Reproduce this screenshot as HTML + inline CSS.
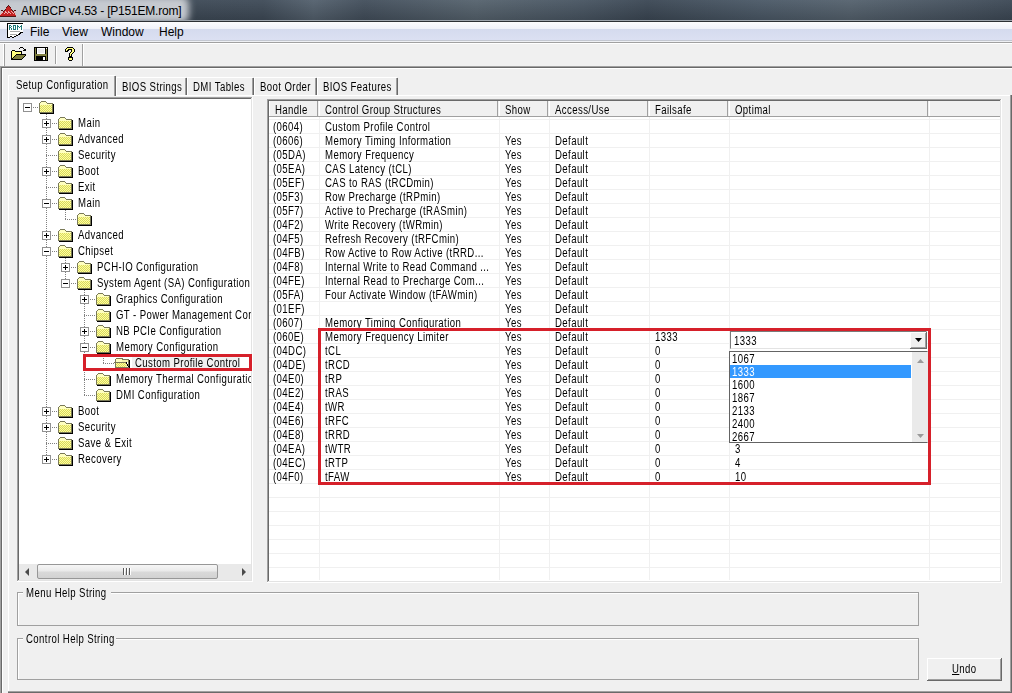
<!DOCTYPE html>
<html><head><meta charset="utf-8"><style>
html,body{margin:0;padding:0;}
body{width:1012px;height:693px;position:relative;overflow:hidden;background:#f0f0f0;font-family:"Liberation Sans",sans-serif;}
.t{position:absolute;white-space:nowrap;font-family:"Liberation Sans",sans-serif;}
.m{position:absolute;white-space:nowrap;font-family:"Liberation Sans",sans-serif;font-size:12px;transform:scaleX(0.8);transform-origin:0 0;letter-spacing:0.5px;}
div{box-sizing:border-box}
</style></head><body>
<div style="position:absolute;left:0px;top:0px;width:1012px;height:20px;background:linear-gradient(90deg,#56616d 0%,#3f4b58 19%,#404c59 26%,#55626f 31%,#44505d 36%,#57646f 47%,#4a5764 57%,#3d4956 64%,#4c5a68 75%,#56636f 84%,#46525f 95%,#3e4a57 100%)"></div>
<div style="position:absolute;left:0px;top:0px;width:1012px;height:20px;background:linear-gradient(180deg,rgba(255,255,255,0.04),rgba(0,0,0,0.16))"></div>
<div style="position:absolute;left:-10px;top:-4px;width:199px;height:27px;background:#c6cad0;filter:blur(3.5px);border-radius:8px"></div>
<div style="position:absolute;left:0px;top:20px;width:1012px;height:1px;background:#9ea5ad"></div>
<div style="position:absolute;left:0px;top:21px;width:1012px;height:1px;background:#2c3035"></div>
<svg style="position:absolute;left:0px;top:2px" width="16" height="15" shape-rendering="crispEdges"><rect x="8" y="3" width="1" height="1" fill="#501818"/><rect x="7" y="4" width="1" height="1" fill="#501818"/><rect x="8" y="4" width="1" height="1" fill="#c42222"/><rect x="9" y="4" width="1" height="1" fill="#501818"/><rect x="6" y="5" width="1" height="1" fill="#501818"/><rect x="7" y="5" width="3" height="1" fill="#c42222"/><rect x="10" y="5" width="1" height="1" fill="#501818"/><rect x="6" y="6" width="5" height="1" fill="#c42222"/><rect x="5" y="7" width="1" height="1" fill="#501818"/><rect x="6" y="7" width="5" height="1" fill="#c42222"/><rect x="11" y="7" width="1" height="1" fill="#501818"/><rect x="1" y="8" width="2" height="1" fill="#501818"/><rect x="4" y="8" width="1" height="1" fill="#501818"/><rect x="5" y="8" width="7" height="1" fill="#c42222"/><rect x="12" y="8" width="1" height="1" fill="#501818"/><rect x="14" y="8" width="2" height="1" fill="#501818"/><rect x="2" y="9" width="1" height="1" fill="#eeb0b0"/><rect x="3" y="9" width="1" height="1" fill="#501818"/><rect x="4" y="9" width="1" height="1" fill="#c42222"/><rect x="5" y="9" width="1" height="1" fill="#eeb0b0"/><rect x="6" y="9" width="2" height="1" fill="#c42222"/><rect x="8" y="9" width="1" height="1" fill="#eeb0b0"/><rect x="9" y="9" width="2" height="1" fill="#c42222"/><rect x="11" y="9" width="1" height="1" fill="#eeb0b0"/><rect x="12" y="9" width="1" height="1" fill="#c42222"/><rect x="13" y="9" width="1" height="1" fill="#501818"/><rect x="14" y="9" width="1" height="1" fill="#eeb0b0"/><rect x="1" y="10" width="1" height="1" fill="#eeb0b0"/><rect x="3" y="10" width="2" height="1" fill="#c42222"/><rect x="5" y="10" width="2" height="1" fill="#eeb0b0"/><rect x="7" y="10" width="1" height="1" fill="#c42222"/><rect x="8" y="10" width="2" height="1" fill="#eeb0b0"/><rect x="10" y="10" width="2" height="1" fill="#c42222"/><rect x="12" y="10" width="1" height="1" fill="#eeb0b0"/><rect x="13" y="10" width="1" height="1" fill="#c42222"/><rect x="15" y="10" width="1" height="1" fill="#eeb0b0"/><rect x="1" y="11" width="1" height="1" fill="#eeb0b0"/><rect x="2" y="11" width="2" height="1" fill="#c42222"/><rect x="4" y="11" width="1" height="1" fill="#eeb0b0"/><rect x="5" y="11" width="2" height="1" fill="#c42222"/><rect x="7" y="11" width="1" height="1" fill="#eeb0b0"/><rect x="8" y="11" width="2" height="1" fill="#c42222"/><rect x="10" y="11" width="1" height="1" fill="#eeb0b0"/><rect x="11" y="11" width="2" height="1" fill="#c42222"/><rect x="13" y="11" width="1" height="1" fill="#eeb0b0"/><rect x="14" y="11" width="1" height="1" fill="#c42222"/><rect x="0" y="12" width="1" height="1" fill="#eeb0b0"/><rect x="1" y="12" width="14" height="1" fill="#c42222"/><rect x="15" y="12" width="1" height="1" fill="#eeb0b0"/><rect x="0" y="13" width="16" height="1" fill="#c42222"/><rect x="0" y="14" width="16" height="1" fill="#501818"/></svg>
<div class="t" style="left:21px;top:3px;line-height:16px;font-size:12px;letter-spacing:-0.2px;color:#000;">AMIBCP v4.53 - [P151EM.rom]</div>
<div style="position:absolute;left:0px;top:22px;width:1012px;height:18px;background:linear-gradient(180deg,#fcfcfe 0%,#f1f3fa 36%,#d5dbee 40%,#dbe0f2 100%)"></div>
<div style="position:absolute;left:0px;top:40px;width:1012px;height:1px;background:#c3c7d0"></div>
<div style="position:absolute;left:0px;top:41px;width:1012px;height:1px;background:#eef0f4"></div>
<svg style="position:absolute;left:4px;top:21px" width="19" height="17" shape-rendering="crispEdges"><rect x="3" y="2" width="16" height="1" fill="#000"/><rect x="3" y="3" width="1" height="1" fill="#000"/><rect x="4" y="3" width="15" height="1" fill="#fff"/><rect x="3" y="4" width="1" height="1" fill="#000"/><rect x="4" y="4" width="1" height="1" fill="#fff"/><rect x="5" y="4" width="2" height="1" fill="#1f7a7a"/><rect x="7" y="4" width="1" height="1" fill="#fff"/><rect x="8" y="4" width="1" height="1" fill="#fff"/><rect x="9" y="4" width="3" height="1" fill="#1f7a7a"/><rect x="12" y="4" width="1" height="1" fill="#fff"/><rect x="13" y="4" width="1" height="1" fill="#1f7a7a"/><rect x="14" y="4" width="3" height="1" fill="#fff"/><rect x="17" y="4" width="1" height="1" fill="#1f7a7a"/><rect x="18" y="4" width="1" height="1" fill="#fff"/><rect x="3" y="5" width="1" height="1" fill="#000"/><rect x="4" y="5" width="1" height="1" fill="#fff"/><rect x="5" y="5" width="1" height="1" fill="#1f7a7a"/><rect x="6" y="5" width="1" height="1" fill="#fff"/><rect x="7" y="5" width="1" height="1" fill="#1f7a7a"/><rect x="8" y="5" width="1" height="1" fill="#fff"/><rect x="9" y="5" width="1" height="1" fill="#1f7a7a"/><rect x="10" y="5" width="1" height="1" fill="#fff"/><rect x="11" y="5" width="1" height="1" fill="#1f7a7a"/><rect x="12" y="5" width="1" height="1" fill="#fff"/><rect x="13" y="5" width="2" height="1" fill="#1f7a7a"/><rect x="15" y="5" width="1" height="1" fill="#fff"/><rect x="16" y="5" width="2" height="1" fill="#1f7a7a"/><rect x="18" y="5" width="1" height="1" fill="#fff"/><rect x="3" y="6" width="1" height="1" fill="#000"/><rect x="4" y="6" width="1" height="1" fill="#fff"/><rect x="5" y="6" width="2" height="1" fill="#1f7a7a"/><rect x="7" y="6" width="1" height="1" fill="#fff"/><rect x="8" y="6" width="1" height="1" fill="#fff"/><rect x="9" y="6" width="1" height="1" fill="#1f7a7a"/><rect x="10" y="6" width="1" height="1" fill="#fff"/><rect x="11" y="6" width="1" height="1" fill="#1f7a7a"/><rect x="12" y="6" width="1" height="1" fill="#fff"/><rect x="13" y="6" width="1" height="1" fill="#1f7a7a"/><rect x="14" y="6" width="1" height="1" fill="#fff"/><rect x="15" y="6" width="1" height="1" fill="#1f7a7a"/><rect x="16" y="6" width="1" height="1" fill="#fff"/><rect x="17" y="6" width="1" height="1" fill="#1f7a7a"/><rect x="18" y="6" width="1" height="1" fill="#fff"/><rect x="3" y="7" width="1" height="1" fill="#000"/><rect x="4" y="7" width="1" height="1" fill="#fff"/><rect x="5" y="7" width="1" height="1" fill="#1f7a7a"/><rect x="6" y="7" width="1" height="1" fill="#fff"/><rect x="7" y="7" width="1" height="1" fill="#1f7a7a"/><rect x="8" y="7" width="1" height="1" fill="#fff"/><rect x="9" y="7" width="1" height="1" fill="#1f7a7a"/><rect x="10" y="7" width="1" height="1" fill="#fff"/><rect x="11" y="7" width="1" height="1" fill="#1f7a7a"/><rect x="12" y="7" width="1" height="1" fill="#fff"/><rect x="13" y="7" width="1" height="1" fill="#1f7a7a"/><rect x="14" y="7" width="3" height="1" fill="#fff"/><rect x="17" y="7" width="1" height="1" fill="#1f7a7a"/><rect x="18" y="7" width="1" height="1" fill="#fff"/><rect x="3" y="8" width="1" height="1" fill="#000"/><rect x="4" y="8" width="1" height="1" fill="#fff"/><rect x="5" y="8" width="1" height="1" fill="#1f7a7a"/><rect x="6" y="8" width="1" height="1" fill="#fff"/><rect x="7" y="8" width="1" height="1" fill="#1f7a7a"/><rect x="8" y="8" width="1" height="1" fill="#fff"/><rect x="9" y="8" width="3" height="1" fill="#1f7a7a"/><rect x="12" y="8" width="1" height="1" fill="#fff"/><rect x="13" y="8" width="1" height="1" fill="#1f7a7a"/><rect x="14" y="8" width="3" height="1" fill="#fff"/><rect x="17" y="8" width="1" height="1" fill="#1f7a7a"/><rect x="18" y="8" width="1" height="1" fill="#fff"/><rect x="3" y="9" width="1" height="1" fill="#000"/><rect x="4" y="9" width="15" height="1" fill="#fff"/><rect x="3" y="10" width="1" height="1" fill="#000"/><rect x="4" y="10" width="2" height="1" fill="#fff"/><rect x="6" y="10" width="10" height="1" fill="#a8a8a8"/><rect x="16" y="10" width="3" height="1" fill="#fff"/><rect x="3" y="11" width="1" height="1" fill="#000"/><rect x="4" y="11" width="12" height="1" fill="#fff"/><rect x="16" y="11" width="3" height="1" fill="#000"/><rect x="3" y="12" width="1" height="1" fill="#000"/><rect x="4" y="12" width="11" height="1" fill="#fff"/><rect x="15" y="12" width="2" height="1" fill="#000"/><rect x="3" y="13" width="1" height="1" fill="#000"/><rect x="4" y="13" width="2" height="1" fill="#fff"/><rect x="6" y="13" width="7" height="1" fill="#a8a8a8"/><rect x="13" y="13" width="1" height="1" fill="#fff"/><rect x="14" y="13" width="2" height="1" fill="#000"/><rect x="3" y="14" width="1" height="1" fill="#000"/><rect x="4" y="14" width="8" height="1" fill="#fff"/><rect x="12" y="14" width="2" height="1" fill="#000"/><rect x="3" y="15" width="1" height="1" fill="#000"/><rect x="4" y="15" width="2" height="1" fill="#fff"/><rect x="6" y="15" width="2" height="1" fill="#000"/><rect x="8" y="15" width="2" height="1" fill="#fff"/><rect x="10" y="15" width="2" height="1" fill="#000"/><rect x="3" y="16" width="3" height="1" fill="#000"/><rect x="8" y="16" width="2" height="1" fill="#000"/></svg>
<div class="t" style="left:30px;top:24px;line-height:16px;font-size:12px;letter-spacing:0px;color:#000;">File</div>
<div class="t" style="left:62px;top:24px;line-height:16px;font-size:12px;letter-spacing:0px;color:#000;">View</div>
<div class="t" style="left:101px;top:24px;line-height:16px;font-size:12px;letter-spacing:0px;color:#000;">Window</div>
<div class="t" style="left:159px;top:24px;line-height:16px;font-size:12px;letter-spacing:0px;color:#000;">Help</div>
<div style="position:absolute;left:0px;top:42px;width:1012px;height:25px;background:#f0f0f0"></div>
<div style="position:absolute;left:0px;top:42px;width:1012px;height:1px;background:#a0a0a0"></div>
<div style="position:absolute;left:0px;top:43px;width:1012px;height:1px;background:#ffffff"></div>
<div style="position:absolute;left:3px;top:44px;width:1px;height:22px;background:#fff"></div>
<div style="position:absolute;left:4px;top:44px;width:1px;height:22px;background:#a0a0a0"></div>
<div style="position:absolute;left:82px;top:44px;width:1px;height:22px;background:#a0a0a0"></div>
<div style="position:absolute;left:83px;top:44px;width:1px;height:22px;background:#fff"></div>
<div style="position:absolute;left:55px;top:46px;width:1px;height:18px;background:#a0a0a0"></div>
<div style="position:absolute;left:56px;top:46px;width:1px;height:18px;background:#fff"></div>
<svg style="position:absolute;left:9px;top:44px" width="19" height="16" shape-rendering="crispEdges"><rect x="11" y="3" width="3" height="1" fill="#000"/><rect x="10" y="4" width="1" height="1" fill="#000"/><rect x="14" y="4" width="1" height="1" fill="#000"/><rect x="15" y="5" width="2" height="1" fill="#000"/><rect x="3" y="6" width="3" height="1" fill="#000"/><rect x="14" y="6" width="3" height="1" fill="#000"/><rect x="2" y="7" width="1" height="1" fill="#000"/><rect x="3" y="7" width="3" height="1" fill="#ffff80"/><rect x="6" y="7" width="7" height="1" fill="#000"/><rect x="2" y="8" width="1" height="1" fill="#000"/><rect x="3" y="8" width="9" height="1" fill="#ffff80"/><rect x="12" y="8" width="1" height="1" fill="#000"/><rect x="2" y="9" width="1" height="1" fill="#000"/><rect x="3" y="9" width="9" height="1" fill="#ffff80"/><rect x="12" y="9" width="1" height="1" fill="#000"/><rect x="2" y="10" width="1" height="1" fill="#000"/><rect x="3" y="10" width="4" height="1" fill="#ffff80"/><rect x="7" y="10" width="10" height="1" fill="#000"/><rect x="2" y="11" width="1" height="1" fill="#000"/><rect x="3" y="11" width="3" height="1" fill="#ffff80"/><rect x="6" y="11" width="1" height="1" fill="#000"/><rect x="7" y="11" width="9" height="1" fill="#808040"/><rect x="16" y="11" width="1" height="1" fill="#000"/><rect x="2" y="12" width="1" height="1" fill="#000"/><rect x="3" y="12" width="2" height="1" fill="#ffff80"/><rect x="5" y="12" width="1" height="1" fill="#000"/><rect x="6" y="12" width="9" height="1" fill="#808040"/><rect x="15" y="12" width="1" height="1" fill="#000"/><rect x="2" y="13" width="1" height="1" fill="#000"/><rect x="3" y="13" width="1" height="1" fill="#ffff80"/><rect x="4" y="13" width="1" height="1" fill="#000"/><rect x="5" y="13" width="9" height="1" fill="#808040"/><rect x="14" y="13" width="1" height="1" fill="#000"/><rect x="2" y="14" width="2" height="1" fill="#000"/><rect x="4" y="14" width="9" height="1" fill="#808040"/><rect x="13" y="14" width="1" height="1" fill="#000"/><rect x="2" y="15" width="11" height="1" fill="#000"/></svg>
<svg style="position:absolute;left:34px;top:47px" width="14" height="14" shape-rendering="crispEdges"><rect x="0" y="0" width="14" height="1" fill="#000"/><rect x="0" y="1" width="1" height="1" fill="#000"/><rect x="1" y="1" width="1" height="1" fill="#808040"/><rect x="2" y="1" width="1" height="1" fill="#000"/><rect x="3" y="1" width="8" height="1" fill="#ffffff"/><rect x="11" y="1" width="1" height="1" fill="#000"/><rect x="12" y="1" width="1" height="1" fill="#ffffff"/><rect x="13" y="1" width="1" height="1" fill="#000"/><rect x="0" y="2" width="1" height="1" fill="#000"/><rect x="1" y="2" width="1" height="1" fill="#808040"/><rect x="2" y="2" width="1" height="1" fill="#000"/><rect x="3" y="2" width="1" height="1" fill="#ffffff"/><rect x="4" y="2" width="6" height="1" fill="#e8e8ec"/><rect x="10" y="2" width="1" height="1" fill="#ffffff"/><rect x="11" y="2" width="1" height="1" fill="#000"/><rect x="12" y="2" width="1" height="1" fill="#808040"/><rect x="13" y="2" width="1" height="1" fill="#000"/><rect x="0" y="3" width="1" height="1" fill="#000"/><rect x="1" y="3" width="1" height="1" fill="#808040"/><rect x="2" y="3" width="1" height="1" fill="#000"/><rect x="3" y="3" width="1" height="1" fill="#ffffff"/><rect x="4" y="3" width="6" height="1" fill="#e8e8ec"/><rect x="10" y="3" width="1" height="1" fill="#ffffff"/><rect x="11" y="3" width="1" height="1" fill="#000"/><rect x="12" y="3" width="1" height="1" fill="#808040"/><rect x="13" y="3" width="1" height="1" fill="#000"/><rect x="0" y="4" width="1" height="1" fill="#000"/><rect x="1" y="4" width="1" height="1" fill="#808040"/><rect x="2" y="4" width="1" height="1" fill="#000"/><rect x="3" y="4" width="1" height="1" fill="#ffffff"/><rect x="4" y="4" width="6" height="1" fill="#e8e8ec"/><rect x="10" y="4" width="1" height="1" fill="#ffffff"/><rect x="11" y="4" width="1" height="1" fill="#000"/><rect x="12" y="4" width="1" height="1" fill="#808040"/><rect x="13" y="4" width="1" height="1" fill="#000"/><rect x="0" y="5" width="1" height="1" fill="#000"/><rect x="1" y="5" width="1" height="1" fill="#808040"/><rect x="2" y="5" width="1" height="1" fill="#000"/><rect x="3" y="5" width="1" height="1" fill="#ffffff"/><rect x="4" y="5" width="6" height="1" fill="#e8e8ec"/><rect x="10" y="5" width="1" height="1" fill="#ffffff"/><rect x="11" y="5" width="1" height="1" fill="#000"/><rect x="12" y="5" width="1" height="1" fill="#808040"/><rect x="13" y="5" width="1" height="1" fill="#000"/><rect x="0" y="6" width="1" height="1" fill="#000"/><rect x="1" y="6" width="1" height="1" fill="#808040"/><rect x="2" y="6" width="1" height="1" fill="#000"/><rect x="3" y="6" width="8" height="1" fill="#ffffff"/><rect x="11" y="6" width="1" height="1" fill="#000"/><rect x="12" y="6" width="1" height="1" fill="#808040"/><rect x="13" y="6" width="1" height="1" fill="#000"/><rect x="0" y="7" width="1" height="1" fill="#000"/><rect x="1" y="7" width="12" height="1" fill="#808040"/><rect x="13" y="7" width="1" height="1" fill="#000"/><rect x="0" y="8" width="1" height="1" fill="#000"/><rect x="1" y="8" width="12" height="1" fill="#808040"/><rect x="13" y="8" width="1" height="1" fill="#000"/><rect x="0" y="9" width="1" height="1" fill="#000"/><rect x="1" y="9" width="1" height="1" fill="#808040"/><rect x="2" y="9" width="10" height="1" fill="#000"/><rect x="12" y="9" width="1" height="1" fill="#808040"/><rect x="13" y="9" width="1" height="1" fill="#000"/><rect x="0" y="10" width="1" height="1" fill="#000"/><rect x="1" y="10" width="1" height="1" fill="#808040"/><rect x="2" y="10" width="7" height="1" fill="#000"/><rect x="9" y="10" width="2" height="1" fill="#ffffff"/><rect x="11" y="10" width="1" height="1" fill="#000"/><rect x="12" y="10" width="1" height="1" fill="#808040"/><rect x="13" y="10" width="1" height="1" fill="#000"/><rect x="0" y="11" width="1" height="1" fill="#000"/><rect x="1" y="11" width="1" height="1" fill="#808040"/><rect x="2" y="11" width="7" height="1" fill="#000"/><rect x="9" y="11" width="2" height="1" fill="#ffffff"/><rect x="11" y="11" width="1" height="1" fill="#000"/><rect x="12" y="11" width="1" height="1" fill="#808040"/><rect x="13" y="11" width="1" height="1" fill="#000"/><rect x="0" y="12" width="1" height="1" fill="#000"/><rect x="1" y="12" width="1" height="1" fill="#808040"/><rect x="2" y="12" width="7" height="1" fill="#000"/><rect x="9" y="12" width="2" height="1" fill="#ffffff"/><rect x="11" y="12" width="1" height="1" fill="#000"/><rect x="12" y="12" width="1" height="1" fill="#808040"/><rect x="13" y="12" width="1" height="1" fill="#000"/><rect x="0" y="13" width="14" height="1" fill="#000"/></svg>
<svg style="position:absolute;left:62px;top:45px" width="14" height="16" shape-rendering="crispEdges"><rect x="5" y="2" width="6" height="1" fill="#000"/><rect x="4" y="3" width="1" height="1" fill="#000"/><rect x="5" y="3" width="6" height="1" fill="#ffff80"/><rect x="11" y="3" width="1" height="1" fill="#000"/><rect x="3" y="4" width="1" height="1" fill="#000"/><rect x="4" y="4" width="2" height="1" fill="#ffff80"/><rect x="6" y="4" width="4" height="1" fill="#000"/><rect x="10" y="4" width="2" height="1" fill="#ffff80"/><rect x="12" y="4" width="1" height="1" fill="#000"/><rect x="3" y="5" width="1" height="1" fill="#000"/><rect x="4" y="5" width="1" height="1" fill="#ffff80"/><rect x="5" y="5" width="2" height="1" fill="#000"/><rect x="9" y="5" width="1" height="1" fill="#000"/><rect x="10" y="5" width="2" height="1" fill="#ffff80"/><rect x="12" y="5" width="1" height="1" fill="#000"/><rect x="3" y="6" width="3" height="1" fill="#000"/><rect x="9" y="6" width="1" height="1" fill="#000"/><rect x="10" y="6" width="2" height="1" fill="#ffff80"/><rect x="12" y="6" width="1" height="1" fill="#000"/><rect x="8" y="7" width="1" height="1" fill="#000"/><rect x="9" y="7" width="2" height="1" fill="#ffff80"/><rect x="11" y="7" width="1" height="1" fill="#000"/><rect x="7" y="8" width="1" height="1" fill="#000"/><rect x="8" y="8" width="2" height="1" fill="#ffff80"/><rect x="10" y="8" width="1" height="1" fill="#000"/><rect x="7" y="9" width="1" height="1" fill="#000"/><rect x="8" y="9" width="1" height="1" fill="#ffff80"/><rect x="9" y="9" width="1" height="1" fill="#000"/><rect x="7" y="10" width="1" height="1" fill="#000"/><rect x="8" y="10" width="1" height="1" fill="#ffff80"/><rect x="9" y="10" width="1" height="1" fill="#000"/><rect x="7" y="11" width="3" height="1" fill="#000"/><rect x="6" y="12" width="5" height="1" fill="#000"/><rect x="6" y="13" width="1" height="1" fill="#000"/><rect x="7" y="13" width="3" height="1" fill="#ffff80"/><rect x="10" y="13" width="1" height="1" fill="#000"/><rect x="6" y="14" width="1" height="1" fill="#000"/><rect x="7" y="14" width="3" height="1" fill="#ffff80"/><rect x="10" y="14" width="1" height="1" fill="#000"/><rect x="7" y="15" width="3" height="1" fill="#000"/></svg>
<div style="position:absolute;left:0px;top:67px;width:1012px;height:626px;background:#f0f0f0"></div>
<div style="position:absolute;left:0px;top:66px;width:1012px;height:1px;background:#a0a0a0"></div>
<div style="position:absolute;left:0px;top:67px;width:1012px;height:1px;background:#696969"></div>
<div style="position:absolute;left:0px;top:67px;width:1px;height:626px;background:#a0a0a0"></div>
<div style="position:absolute;left:1px;top:68px;width:1px;height:625px;background:#696969"></div>
<div style="position:absolute;left:8px;top:95px;width:1003px;height:1px;background:#fff"></div>
<div style="position:absolute;left:8px;top:95px;width:1px;height:596px;background:#fff"></div>
<div style="position:absolute;left:1010px;top:95px;width:1px;height:597px;background:#a0a0a0"></div>
<div style="position:absolute;left:1011px;top:95px;width:1px;height:598px;background:#696969"></div>
<div style="position:absolute;left:8px;top:691px;width:1003px;height:1px;background:#a0a0a0"></div>
<div style="position:absolute;left:8px;top:692px;width:1004px;height:1px;background:#696969"></div>
<div style="position:absolute;left:2px;top:68px;width:1px;height:625px;background:#fff"></div>
<div style="position:absolute;left:2px;top:68px;width:1010px;height:1px;background:#fff"></div>
<div style="position:absolute;left:116px;top:77px;width:1px;height:18px;background:#fff"></div>
<div style="position:absolute;left:116px;top:77px;width:70px;height:1px;background:#fff"></div>
<div style="position:absolute;left:185px;top:78px;width:1px;height:17px;background:#a0a0a0"></div>
<div style="position:absolute;left:186px;top:78px;width:1px;height:17px;background:#696969"></div>
<div class="m" style="left:122px;top:80px;line-height:14px;color:#000;">BIOS Strings</div>
<div style="position:absolute;left:187px;top:77px;width:1px;height:18px;background:#fff"></div>
<div style="position:absolute;left:187px;top:77px;width:66px;height:1px;background:#fff"></div>
<div style="position:absolute;left:252px;top:78px;width:1px;height:17px;background:#a0a0a0"></div>
<div style="position:absolute;left:253px;top:78px;width:1px;height:17px;background:#696969"></div>
<div class="m" style="left:193px;top:80px;line-height:14px;color:#000;">DMI Tables</div>
<div style="position:absolute;left:254px;top:77px;width:1px;height:18px;background:#fff"></div>
<div style="position:absolute;left:254px;top:77px;width:62px;height:1px;background:#fff"></div>
<div style="position:absolute;left:315px;top:78px;width:1px;height:17px;background:#a0a0a0"></div>
<div style="position:absolute;left:316px;top:78px;width:1px;height:17px;background:#696969"></div>
<div class="m" style="left:260px;top:80px;line-height:14px;color:#000;">Boot Order</div>
<div style="position:absolute;left:317px;top:77px;width:1px;height:18px;background:#fff"></div>
<div style="position:absolute;left:317px;top:77px;width:80px;height:1px;background:#fff"></div>
<div style="position:absolute;left:396px;top:78px;width:1px;height:17px;background:#a0a0a0"></div>
<div style="position:absolute;left:397px;top:78px;width:1px;height:17px;background:#696969"></div>
<div class="m" style="left:323px;top:80px;line-height:14px;color:#000;">BIOS Features</div>
<div style="position:absolute;left:8px;top:75px;width:107px;height:21px;background:#f0f0f0"></div>
<div style="position:absolute;left:8px;top:75px;width:107px;height:1px;background:#fff"></div>
<div style="position:absolute;left:8px;top:75px;width:1px;height:21px;background:#fff"></div>
<div style="position:absolute;left:114px;top:76px;width:1px;height:20px;background:#a0a0a0"></div>
<div style="position:absolute;left:115px;top:76px;width:1px;height:20px;background:#696969"></div>
<div class="m" style="left:16px;top:78px;line-height:14px;color:#000;">Setup Configuration</div>
<div style="position:absolute;left:17px;top:97px;width:236px;height:485px;background:#fff"></div>
<div style="position:absolute;left:17px;top:97px;width:236px;height:1px;background:#a0a0a0"></div>
<div style="position:absolute;left:17px;top:97px;width:1px;height:485px;background:#a0a0a0"></div>
<div style="position:absolute;left:18px;top:98px;width:234px;height:1px;background:#696969"></div>
<div style="position:absolute;left:18px;top:98px;width:1px;height:483px;background:#696969"></div>
<div style="position:absolute;left:17px;top:581px;width:236px;height:1px;background:#fff"></div>
<div style="position:absolute;left:252px;top:97px;width:1px;height:485px;background:#fff"></div>
<div style="position:absolute;left:18px;top:580px;width:234px;height:1px;background:#e3e3e3"></div>
<div style="position:absolute;left:251px;top:98px;width:1px;height:483px;background:#e3e3e3"></div>
<div style="position:absolute;left:19px;top:99px;width:232px;height:465px;overflow:hidden">
<svg style="position:absolute;left:0;top:0" width="232" height="465" shape-rendering="crispEdges"><g fill="#808080"><defs><pattern id="dith" width="2" height="2" patternUnits="userSpaceOnUse"><rect width="2" height="2" fill="#ffff9c"/><rect width="1" height="1" fill="#d8d860"/><rect x="1" y="1" width="1" height="1" fill="#d8d860"/></pattern><g id="fold"><rect x="2" y="0" width="5" height="1" fill="#7a7a58"/><rect x="1" y="1" width="1" height="1" fill="#7a7a58"/><rect x="7" y="1" width="1" height="1" fill="#7a7a58"/><rect x="2" y="1" width="5" height="1" fill="#ffffc0"/><rect x="0" y="2" width="1" height="10" fill="#7a7a58"/><rect x="8" y="2" width="6" height="1" fill="#7a7a58"/><rect x="1" y="2" width="7" height="1" fill="#ffffc0"/><rect x="1" y="3" width="12" height="8" fill="url(#dith)"/><rect x="1" y="3" width="12" height="1" fill="#ffffc0"/><rect x="13" y="3" width="1" height="9" fill="#7a7a58"/><rect x="0" y="11" width="14" height="1" fill="#7a7a58"/><rect x="14" y="3" width="1" height="10" fill="#000"/><rect x="1" y="12" width="14" height="1" fill="#000"/></g><g id="ofold"><rect x="1" y="1" width="7" height="1" fill="#7a7a58"/><rect x="0" y="2" width="1" height="9" fill="#7a7a58"/><rect x="1" y="2" width="6" height="3" fill="#ffffc0"/><rect x="7" y="2" width="6" height="1" fill="#7a7a58"/><rect x="7" y="3" width="6" height="2" fill="#f4f4b0"/><rect x="13" y="2" width="1" height="9" fill="#7a7a58"/><rect x="14" y="3" width="1" height="8" fill="#000"/><rect x="-1" y="5" width="13" height="1" fill="#7a7a58"/><rect x="1" y="6" width="10" height="4" fill="url(#dith)"/><rect x="11" y="5" width="1" height="2" fill="#000"/><rect x="12" y="7" width="1" height="2" fill="#000"/><rect x="13" y="9" width="1" height="1" fill="#000"/><rect x="11" y="7" width="1" height="3" fill="#eeee99"/><rect x="1" y="10" width="13" height="1" fill="#7a7a58"/></g></defs><rect x="27" y="15" width="1" height="1"/><rect x="27" y="17" width="1" height="1"/><rect x="27" y="19" width="1" height="1"/><rect x="27" y="21" width="1" height="1"/><rect x="27" y="23" width="1" height="1"/><rect x="27" y="25" width="1" height="1"/><rect x="27" y="27" width="1" height="1"/><rect x="27" y="29" width="1" height="1"/><rect x="27" y="31" width="1" height="1"/><rect x="27" y="33" width="1" height="1"/><rect x="27" y="35" width="1" height="1"/><rect x="27" y="37" width="1" height="1"/><rect x="27" y="39" width="1" height="1"/><rect x="27" y="41" width="1" height="1"/><rect x="27" y="43" width="1" height="1"/><rect x="27" y="45" width="1" height="1"/><rect x="27" y="47" width="1" height="1"/><rect x="27" y="49" width="1" height="1"/><rect x="27" y="51" width="1" height="1"/><rect x="27" y="53" width="1" height="1"/><rect x="27" y="55" width="1" height="1"/><rect x="27" y="57" width="1" height="1"/><rect x="27" y="59" width="1" height="1"/><rect x="27" y="61" width="1" height="1"/><rect x="27" y="63" width="1" height="1"/><rect x="27" y="65" width="1" height="1"/><rect x="27" y="67" width="1" height="1"/><rect x="27" y="69" width="1" height="1"/><rect x="27" y="71" width="1" height="1"/><rect x="27" y="73" width="1" height="1"/><rect x="27" y="75" width="1" height="1"/><rect x="27" y="77" width="1" height="1"/><rect x="27" y="79" width="1" height="1"/><rect x="27" y="81" width="1" height="1"/><rect x="27" y="83" width="1" height="1"/><rect x="27" y="85" width="1" height="1"/><rect x="27" y="87" width="1" height="1"/><rect x="27" y="89" width="1" height="1"/><rect x="27" y="91" width="1" height="1"/><rect x="27" y="93" width="1" height="1"/><rect x="27" y="95" width="1" height="1"/><rect x="27" y="97" width="1" height="1"/><rect x="27" y="99" width="1" height="1"/><rect x="27" y="101" width="1" height="1"/><rect x="27" y="103" width="1" height="1"/><rect x="27" y="105" width="1" height="1"/><rect x="27" y="107" width="1" height="1"/><rect x="27" y="109" width="1" height="1"/><rect x="27" y="111" width="1" height="1"/><rect x="27" y="113" width="1" height="1"/><rect x="27" y="115" width="1" height="1"/><rect x="27" y="117" width="1" height="1"/><rect x="27" y="119" width="1" height="1"/><rect x="27" y="121" width="1" height="1"/><rect x="27" y="123" width="1" height="1"/><rect x="27" y="125" width="1" height="1"/><rect x="27" y="127" width="1" height="1"/><rect x="27" y="129" width="1" height="1"/><rect x="27" y="131" width="1" height="1"/><rect x="27" y="133" width="1" height="1"/><rect x="27" y="135" width="1" height="1"/><rect x="27" y="137" width="1" height="1"/><rect x="27" y="139" width="1" height="1"/><rect x="27" y="141" width="1" height="1"/><rect x="27" y="143" width="1" height="1"/><rect x="27" y="145" width="1" height="1"/><rect x="27" y="147" width="1" height="1"/><rect x="27" y="149" width="1" height="1"/><rect x="27" y="151" width="1" height="1"/><rect x="27" y="153" width="1" height="1"/><rect x="27" y="155" width="1" height="1"/><rect x="27" y="157" width="1" height="1"/><rect x="27" y="159" width="1" height="1"/><rect x="27" y="161" width="1" height="1"/><rect x="27" y="163" width="1" height="1"/><rect x="27" y="165" width="1" height="1"/><rect x="27" y="167" width="1" height="1"/><rect x="27" y="169" width="1" height="1"/><rect x="27" y="171" width="1" height="1"/><rect x="27" y="173" width="1" height="1"/><rect x="27" y="175" width="1" height="1"/><rect x="27" y="177" width="1" height="1"/><rect x="27" y="179" width="1" height="1"/><rect x="27" y="181" width="1" height="1"/><rect x="27" y="183" width="1" height="1"/><rect x="27" y="185" width="1" height="1"/><rect x="27" y="187" width="1" height="1"/><rect x="27" y="189" width="1" height="1"/><rect x="27" y="191" width="1" height="1"/><rect x="27" y="193" width="1" height="1"/><rect x="27" y="195" width="1" height="1"/><rect x="27" y="197" width="1" height="1"/><rect x="27" y="199" width="1" height="1"/><rect x="27" y="201" width="1" height="1"/><rect x="27" y="203" width="1" height="1"/><rect x="27" y="205" width="1" height="1"/><rect x="27" y="207" width="1" height="1"/><rect x="27" y="209" width="1" height="1"/><rect x="27" y="211" width="1" height="1"/><rect x="27" y="213" width="1" height="1"/><rect x="27" y="215" width="1" height="1"/><rect x="27" y="217" width="1" height="1"/><rect x="27" y="219" width="1" height="1"/><rect x="27" y="221" width="1" height="1"/><rect x="27" y="223" width="1" height="1"/><rect x="27" y="225" width="1" height="1"/><rect x="27" y="227" width="1" height="1"/><rect x="27" y="229" width="1" height="1"/><rect x="27" y="231" width="1" height="1"/><rect x="27" y="233" width="1" height="1"/><rect x="27" y="235" width="1" height="1"/><rect x="27" y="237" width="1" height="1"/><rect x="27" y="239" width="1" height="1"/><rect x="27" y="241" width="1" height="1"/><rect x="27" y="243" width="1" height="1"/><rect x="27" y="245" width="1" height="1"/><rect x="27" y="247" width="1" height="1"/><rect x="27" y="249" width="1" height="1"/><rect x="27" y="251" width="1" height="1"/><rect x="27" y="253" width="1" height="1"/><rect x="27" y="255" width="1" height="1"/><rect x="27" y="257" width="1" height="1"/><rect x="27" y="259" width="1" height="1"/><rect x="27" y="261" width="1" height="1"/><rect x="27" y="263" width="1" height="1"/><rect x="27" y="265" width="1" height="1"/><rect x="27" y="267" width="1" height="1"/><rect x="27" y="269" width="1" height="1"/><rect x="27" y="271" width="1" height="1"/><rect x="27" y="273" width="1" height="1"/><rect x="27" y="275" width="1" height="1"/><rect x="27" y="277" width="1" height="1"/><rect x="27" y="279" width="1" height="1"/><rect x="27" y="281" width="1" height="1"/><rect x="27" y="283" width="1" height="1"/><rect x="27" y="285" width="1" height="1"/><rect x="27" y="287" width="1" height="1"/><rect x="27" y="289" width="1" height="1"/><rect x="27" y="291" width="1" height="1"/><rect x="27" y="293" width="1" height="1"/><rect x="27" y="295" width="1" height="1"/><rect x="27" y="297" width="1" height="1"/><rect x="27" y="299" width="1" height="1"/><rect x="27" y="301" width="1" height="1"/><rect x="27" y="303" width="1" height="1"/><rect x="27" y="305" width="1" height="1"/><rect x="27" y="307" width="1" height="1"/><rect x="27" y="309" width="1" height="1"/><rect x="27" y="311" width="1" height="1"/><rect x="27" y="313" width="1" height="1"/><rect x="27" y="315" width="1" height="1"/><rect x="27" y="317" width="1" height="1"/><rect x="27" y="319" width="1" height="1"/><rect x="27" y="321" width="1" height="1"/><rect x="27" y="323" width="1" height="1"/><rect x="27" y="325" width="1" height="1"/><rect x="27" y="327" width="1" height="1"/><rect x="27" y="329" width="1" height="1"/><rect x="27" y="331" width="1" height="1"/><rect x="27" y="333" width="1" height="1"/><rect x="27" y="335" width="1" height="1"/><rect x="27" y="337" width="1" height="1"/><rect x="27" y="339" width="1" height="1"/><rect x="27" y="341" width="1" height="1"/><rect x="27" y="343" width="1" height="1"/><rect x="27" y="345" width="1" height="1"/><rect x="27" y="347" width="1" height="1"/><rect x="27" y="349" width="1" height="1"/><rect x="27" y="351" width="1" height="1"/><rect x="27" y="353" width="1" height="1"/><rect x="27" y="355" width="1" height="1"/><rect x="27" y="357" width="1" height="1"/><rect x="27" y="359" width="1" height="1"/><rect x="14" y="8" width="1" height="1"/><rect x="16" y="8" width="1" height="1"/><rect x="18" y="8" width="1" height="1"/><rect x="33" y="24" width="1" height="1"/><rect x="35" y="24" width="1" height="1"/><rect x="37" y="24" width="1" height="1"/><rect x="33" y="40" width="1" height="1"/><rect x="35" y="40" width="1" height="1"/><rect x="37" y="40" width="1" height="1"/><rect x="27" y="56" width="1" height="1"/><rect x="29" y="56" width="1" height="1"/><rect x="31" y="56" width="1" height="1"/><rect x="33" y="56" width="1" height="1"/><rect x="35" y="56" width="1" height="1"/><rect x="37" y="56" width="1" height="1"/><rect x="33" y="72" width="1" height="1"/><rect x="35" y="72" width="1" height="1"/><rect x="37" y="72" width="1" height="1"/><rect x="27" y="88" width="1" height="1"/><rect x="29" y="88" width="1" height="1"/><rect x="31" y="88" width="1" height="1"/><rect x="33" y="88" width="1" height="1"/><rect x="35" y="88" width="1" height="1"/><rect x="37" y="88" width="1" height="1"/><rect x="46" y="111" width="1" height="1"/><rect x="46" y="113" width="1" height="1"/><rect x="46" y="115" width="1" height="1"/><rect x="46" y="117" width="1" height="1"/><rect x="46" y="119" width="1" height="1"/><rect x="33" y="104" width="1" height="1"/><rect x="35" y="104" width="1" height="1"/><rect x="37" y="104" width="1" height="1"/><rect x="46" y="120" width="1" height="1"/><rect x="48" y="120" width="1" height="1"/><rect x="50" y="120" width="1" height="1"/><rect x="52" y="120" width="1" height="1"/><rect x="54" y="120" width="1" height="1"/><rect x="56" y="120" width="1" height="1"/><rect x="33" y="136" width="1" height="1"/><rect x="35" y="136" width="1" height="1"/><rect x="37" y="136" width="1" height="1"/><rect x="46" y="159" width="1" height="1"/><rect x="46" y="161" width="1" height="1"/><rect x="46" y="163" width="1" height="1"/><rect x="46" y="165" width="1" height="1"/><rect x="46" y="167" width="1" height="1"/><rect x="46" y="169" width="1" height="1"/><rect x="46" y="171" width="1" height="1"/><rect x="46" y="173" width="1" height="1"/><rect x="46" y="175" width="1" height="1"/><rect x="46" y="177" width="1" height="1"/><rect x="46" y="179" width="1" height="1"/><rect x="46" y="181" width="1" height="1"/><rect x="46" y="183" width="1" height="1"/><rect x="33" y="152" width="1" height="1"/><rect x="35" y="152" width="1" height="1"/><rect x="37" y="152" width="1" height="1"/><rect x="52" y="168" width="1" height="1"/><rect x="54" y="168" width="1" height="1"/><rect x="56" y="168" width="1" height="1"/><rect x="65" y="191" width="1" height="1"/><rect x="65" y="193" width="1" height="1"/><rect x="65" y="195" width="1" height="1"/><rect x="65" y="197" width="1" height="1"/><rect x="65" y="199" width="1" height="1"/><rect x="65" y="201" width="1" height="1"/><rect x="65" y="203" width="1" height="1"/><rect x="65" y="205" width="1" height="1"/><rect x="65" y="207" width="1" height="1"/><rect x="65" y="209" width="1" height="1"/><rect x="65" y="211" width="1" height="1"/><rect x="65" y="213" width="1" height="1"/><rect x="65" y="215" width="1" height="1"/><rect x="65" y="217" width="1" height="1"/><rect x="65" y="219" width="1" height="1"/><rect x="65" y="221" width="1" height="1"/><rect x="65" y="223" width="1" height="1"/><rect x="65" y="225" width="1" height="1"/><rect x="65" y="227" width="1" height="1"/><rect x="65" y="229" width="1" height="1"/><rect x="65" y="231" width="1" height="1"/><rect x="65" y="233" width="1" height="1"/><rect x="65" y="235" width="1" height="1"/><rect x="65" y="237" width="1" height="1"/><rect x="65" y="239" width="1" height="1"/><rect x="65" y="241" width="1" height="1"/><rect x="65" y="243" width="1" height="1"/><rect x="65" y="245" width="1" height="1"/><rect x="65" y="247" width="1" height="1"/><rect x="65" y="249" width="1" height="1"/><rect x="65" y="251" width="1" height="1"/><rect x="65" y="253" width="1" height="1"/><rect x="65" y="255" width="1" height="1"/><rect x="65" y="257" width="1" height="1"/><rect x="65" y="259" width="1" height="1"/><rect x="65" y="261" width="1" height="1"/><rect x="65" y="263" width="1" height="1"/><rect x="65" y="265" width="1" height="1"/><rect x="65" y="267" width="1" height="1"/><rect x="65" y="269" width="1" height="1"/><rect x="65" y="271" width="1" height="1"/><rect x="65" y="273" width="1" height="1"/><rect x="65" y="275" width="1" height="1"/><rect x="65" y="277" width="1" height="1"/><rect x="65" y="279" width="1" height="1"/><rect x="65" y="281" width="1" height="1"/><rect x="65" y="283" width="1" height="1"/><rect x="65" y="285" width="1" height="1"/><rect x="65" y="287" width="1" height="1"/><rect x="65" y="289" width="1" height="1"/><rect x="65" y="291" width="1" height="1"/><rect x="65" y="293" width="1" height="1"/><rect x="65" y="295" width="1" height="1"/><rect x="52" y="184" width="1" height="1"/><rect x="54" y="184" width="1" height="1"/><rect x="56" y="184" width="1" height="1"/><rect x="71" y="200" width="1" height="1"/><rect x="73" y="200" width="1" height="1"/><rect x="75" y="200" width="1" height="1"/><rect x="65" y="216" width="1" height="1"/><rect x="67" y="216" width="1" height="1"/><rect x="69" y="216" width="1" height="1"/><rect x="71" y="216" width="1" height="1"/><rect x="73" y="216" width="1" height="1"/><rect x="75" y="216" width="1" height="1"/><rect x="71" y="232" width="1" height="1"/><rect x="73" y="232" width="1" height="1"/><rect x="75" y="232" width="1" height="1"/><rect x="84" y="255" width="1" height="1"/><rect x="84" y="257" width="1" height="1"/><rect x="84" y="259" width="1" height="1"/><rect x="84" y="261" width="1" height="1"/><rect x="84" y="263" width="1" height="1"/><rect x="71" y="248" width="1" height="1"/><rect x="73" y="248" width="1" height="1"/><rect x="75" y="248" width="1" height="1"/><rect x="84" y="264" width="1" height="1"/><rect x="86" y="264" width="1" height="1"/><rect x="88" y="264" width="1" height="1"/><rect x="90" y="264" width="1" height="1"/><rect x="92" y="264" width="1" height="1"/><rect x="94" y="264" width="1" height="1"/><rect x="65" y="280" width="1" height="1"/><rect x="67" y="280" width="1" height="1"/><rect x="69" y="280" width="1" height="1"/><rect x="71" y="280" width="1" height="1"/><rect x="73" y="280" width="1" height="1"/><rect x="75" y="280" width="1" height="1"/><rect x="65" y="296" width="1" height="1"/><rect x="67" y="296" width="1" height="1"/><rect x="69" y="296" width="1" height="1"/><rect x="71" y="296" width="1" height="1"/><rect x="73" y="296" width="1" height="1"/><rect x="75" y="296" width="1" height="1"/><rect x="33" y="312" width="1" height="1"/><rect x="35" y="312" width="1" height="1"/><rect x="37" y="312" width="1" height="1"/><rect x="33" y="328" width="1" height="1"/><rect x="35" y="328" width="1" height="1"/><rect x="37" y="328" width="1" height="1"/><rect x="27" y="344" width="1" height="1"/><rect x="29" y="344" width="1" height="1"/><rect x="31" y="344" width="1" height="1"/><rect x="33" y="344" width="1" height="1"/><rect x="35" y="344" width="1" height="1"/><rect x="37" y="344" width="1" height="1"/><rect x="33" y="360" width="1" height="1"/><rect x="35" y="360" width="1" height="1"/><rect x="37" y="360" width="1" height="1"/><rect x="4.5" y="4.5" width="8" height="8" fill="#fff" stroke="#919191"/><rect x="6" y="8" width="5" height="1" fill="#000"/><use href="#fold" x="20" y="2"/><rect x="23.5" y="20.5" width="8" height="8" fill="#fff" stroke="#919191"/><rect x="25" y="24" width="5" height="1" fill="#000"/><rect x="27" y="22" width="1" height="5" fill="#000"/><use href="#fold" x="39" y="18"/><rect x="23.5" y="36.5" width="8" height="8" fill="#fff" stroke="#919191"/><rect x="25" y="40" width="5" height="1" fill="#000"/><rect x="27" y="38" width="1" height="5" fill="#000"/><use href="#fold" x="39" y="34"/><use href="#fold" x="39" y="50"/><rect x="23.5" y="68.5" width="8" height="8" fill="#fff" stroke="#919191"/><rect x="25" y="72" width="5" height="1" fill="#000"/><rect x="27" y="70" width="1" height="5" fill="#000"/><use href="#fold" x="39" y="66"/><use href="#fold" x="39" y="82"/><rect x="23.5" y="100.5" width="8" height="8" fill="#fff" stroke="#919191"/><rect x="25" y="104" width="5" height="1" fill="#000"/><use href="#fold" x="39" y="98"/><use href="#fold" x="58" y="114"/><rect x="23.5" y="132.5" width="8" height="8" fill="#fff" stroke="#919191"/><rect x="25" y="136" width="5" height="1" fill="#000"/><rect x="27" y="134" width="1" height="5" fill="#000"/><use href="#fold" x="39" y="130"/><rect x="23.5" y="148.5" width="8" height="8" fill="#fff" stroke="#919191"/><rect x="25" y="152" width="5" height="1" fill="#000"/><use href="#fold" x="39" y="146"/><rect x="42.5" y="164.5" width="8" height="8" fill="#fff" stroke="#919191"/><rect x="44" y="168" width="5" height="1" fill="#000"/><rect x="46" y="166" width="1" height="5" fill="#000"/><use href="#fold" x="58" y="162"/><rect x="42.5" y="180.5" width="8" height="8" fill="#fff" stroke="#919191"/><rect x="44" y="184" width="5" height="1" fill="#000"/><use href="#fold" x="58" y="178"/><rect x="61.5" y="196.5" width="8" height="8" fill="#fff" stroke="#919191"/><rect x="63" y="200" width="5" height="1" fill="#000"/><rect x="65" y="198" width="1" height="5" fill="#000"/><use href="#fold" x="77" y="194"/><use href="#fold" x="77" y="210"/><rect x="61.5" y="228.5" width="8" height="8" fill="#fff" stroke="#919191"/><rect x="63" y="232" width="5" height="1" fill="#000"/><rect x="65" y="230" width="1" height="5" fill="#000"/><use href="#fold" x="77" y="226"/><rect x="61.5" y="244.5" width="8" height="8" fill="#fff" stroke="#919191"/><rect x="63" y="248" width="5" height="1" fill="#000"/><use href="#fold" x="77" y="242"/><use href="#ofold" x="96" y="258"/><use href="#fold" x="77" y="274"/><use href="#fold" x="77" y="290"/><rect x="23.5" y="308.5" width="8" height="8" fill="#fff" stroke="#919191"/><rect x="25" y="312" width="5" height="1" fill="#000"/><rect x="27" y="310" width="1" height="5" fill="#000"/><use href="#fold" x="39" y="306"/><rect x="23.5" y="324.5" width="8" height="8" fill="#fff" stroke="#919191"/><rect x="25" y="328" width="5" height="1" fill="#000"/><rect x="27" y="326" width="1" height="5" fill="#000"/><use href="#fold" x="39" y="322"/><use href="#fold" x="39" y="338"/><rect x="23.5" y="356.5" width="8" height="8" fill="#fff" stroke="#919191"/><rect x="25" y="360" width="5" height="1" fill="#000"/><rect x="27" y="358" width="1" height="5" fill="#000"/><use href="#fold" x="39" y="354"/></g></svg>
<div style="position:absolute;left:113px;top:257px;width:108px;height:14px;background:#f0f0f0"></div>
<div class="m" style="left:59px;top:17px;line-height:14px;color:#000;white-space:nowrap">Main</div>
<div class="m" style="left:59px;top:33px;line-height:14px;color:#000;white-space:nowrap">Advanced</div>
<div class="m" style="left:59px;top:49px;line-height:14px;color:#000;white-space:nowrap">Security</div>
<div class="m" style="left:59px;top:65px;line-height:14px;color:#000;white-space:nowrap">Boot</div>
<div class="m" style="left:59px;top:81px;line-height:14px;color:#000;white-space:nowrap">Exit</div>
<div class="m" style="left:59px;top:97px;line-height:14px;color:#000;white-space:nowrap">Main</div>
<div class="m" style="left:59px;top:129px;line-height:14px;color:#000;white-space:nowrap">Advanced</div>
<div class="m" style="left:59px;top:145px;line-height:14px;color:#000;white-space:nowrap">Chipset</div>
<div class="m" style="left:78px;top:161px;line-height:14px;color:#000;white-space:nowrap">PCH-IO Configuration</div>
<div class="m" style="left:78px;top:177px;line-height:14px;color:#000;white-space:nowrap">System Agent (SA) Configuration</div>
<div class="m" style="left:97px;top:193px;line-height:14px;color:#000;white-space:nowrap">Graphics Configuration</div>
<div class="m" style="left:97px;top:209px;line-height:14px;color:#000;white-space:nowrap">GT - Power Management Configuration</div>
<div class="m" style="left:97px;top:225px;line-height:14px;color:#000;white-space:nowrap">NB PCIe Configuration</div>
<div class="m" style="left:97px;top:241px;line-height:14px;color:#000;white-space:nowrap">Memory Configuration</div>
<div class="m" style="left:116px;top:257px;line-height:14px;color:#000;white-space:nowrap">Custom Profile Control</div>
<div class="m" style="left:97px;top:273px;line-height:14px;color:#000;white-space:nowrap">Memory Thermal Configuration</div>
<div class="m" style="left:97px;top:289px;line-height:14px;color:#000;white-space:nowrap">DMI Configuration</div>
<div class="m" style="left:59px;top:305px;line-height:14px;color:#000;white-space:nowrap">Boot</div>
<div class="m" style="left:59px;top:321px;line-height:14px;color:#000;white-space:nowrap">Security</div>
<div class="m" style="left:59px;top:337px;line-height:14px;color:#000;white-space:nowrap">Save &amp; Exit</div>
<div class="m" style="left:59px;top:353px;line-height:14px;color:#000;white-space:nowrap">Recovery</div>
</div>
<div style="position:absolute;left:83px;top:354px;width:169px;height:17px;border:3px solid #d6202a;box-sizing:border-box"></div>
<div style="position:absolute;left:19px;top:564px;width:232px;height:16px;background:#e9e9e9"></div>
<div style="position:absolute;left:37px;top:564px;width:181px;height:15px;background:linear-gradient(180deg,#f6f6f6 0%,#eaeaea 45%,#d9d9d9 55%,#d2d2d2 100%);border:1px solid #979797;border-radius:2px;box-sizing:border-box"></div>
<svg style="position:absolute;left:25px;top:568px" width="5" height="8"><path d="M4 0 V8 L0 4 Z" fill="#4a4a4a"/></svg>
<svg style="position:absolute;left:242px;top:568px" width="5" height="8"><path d="M0 0 V8 L4 4 Z" fill="#4a4a4a"/></svg>
<div style="position:absolute;left:123px;top:568px;width:1px;height:7px;background:#5a5a5a"></div>
<div style="position:absolute;left:124px;top:568px;width:1px;height:7px;background:#fff"></div>
<div style="position:absolute;left:126px;top:568px;width:1px;height:7px;background:#5a5a5a"></div>
<div style="position:absolute;left:127px;top:568px;width:1px;height:7px;background:#fff"></div>
<div style="position:absolute;left:129px;top:568px;width:1px;height:7px;background:#5a5a5a"></div>
<div style="position:absolute;left:130px;top:568px;width:1px;height:7px;background:#fff"></div>
<div style="position:absolute;left:267px;top:99px;width:735px;height:484px;background:#fff"></div>
<div style="position:absolute;left:267px;top:99px;width:735px;height:1px;background:#a0a0a0"></div>
<div style="position:absolute;left:267px;top:99px;width:1px;height:484px;background:#a0a0a0"></div>
<div style="position:absolute;left:268px;top:100px;width:733px;height:1px;background:#696969"></div>
<div style="position:absolute;left:268px;top:100px;width:1px;height:482px;background:#696969"></div>
<div style="position:absolute;left:267px;top:582px;width:735px;height:1px;background:#fff"></div>
<div style="position:absolute;left:1001px;top:99px;width:1px;height:484px;background:#fff"></div>
<div style="position:absolute;left:268px;top:581px;width:733px;height:1px;background:#e3e3e3"></div>
<div style="position:absolute;left:1000px;top:100px;width:1px;height:482px;background:#e3e3e3"></div>
<div style="position:absolute;left:269px;top:101px;width:731px;height:16px;background:#f0f0f0"></div>
<div style="position:absolute;left:269px;top:116px;width:731px;height:1px;background:#a0a0a0"></div>
<div style="position:absolute;left:269px;top:101px;width:1px;height:15px;background:#fff"></div>
<div style="position:absolute;left:319px;top:101px;width:1px;height:15px;background:#fff"></div>
<div style="position:absolute;left:317px;top:101px;width:1px;height:16px;background:#a0a0a0"></div>
<div style="position:absolute;left:499px;top:101px;width:1px;height:15px;background:#fff"></div>
<div style="position:absolute;left:497px;top:101px;width:1px;height:16px;background:#a0a0a0"></div>
<div style="position:absolute;left:549px;top:101px;width:1px;height:15px;background:#fff"></div>
<div style="position:absolute;left:547px;top:101px;width:1px;height:16px;background:#a0a0a0"></div>
<div style="position:absolute;left:649px;top:101px;width:1px;height:15px;background:#fff"></div>
<div style="position:absolute;left:647px;top:101px;width:1px;height:16px;background:#a0a0a0"></div>
<div style="position:absolute;left:729px;top:101px;width:1px;height:15px;background:#fff"></div>
<div style="position:absolute;left:727px;top:101px;width:1px;height:16px;background:#a0a0a0"></div>
<div style="position:absolute;left:929px;top:101px;width:1px;height:15px;background:#fff"></div>
<div style="position:absolute;left:927px;top:101px;width:1px;height:16px;background:#a0a0a0"></div>
<div class="m" style="left:275px;top:103px;line-height:14px;color:#000;">Handle</div>
<div class="m" style="left:325px;top:103px;line-height:14px;color:#000;">Control Group Structures</div>
<div class="m" style="left:505px;top:103px;line-height:14px;color:#000;">Show</div>
<div class="m" style="left:555px;top:103px;line-height:14px;color:#000;">Access/Use</div>
<div class="m" style="left:655px;top:103px;line-height:14px;color:#000;">Failsafe</div>
<div class="m" style="left:735px;top:103px;line-height:14px;color:#000;">Optimal</div>
<div style="position:absolute;left:269px;top:119px;width:731px;height:1px;background:#f0f0f0"></div>
<div style="position:absolute;left:269px;top:133px;width:731px;height:1px;background:#f0f0f0"></div>
<div style="position:absolute;left:269px;top:147px;width:731px;height:1px;background:#f0f0f0"></div>
<div style="position:absolute;left:269px;top:161px;width:731px;height:1px;background:#f0f0f0"></div>
<div style="position:absolute;left:269px;top:175px;width:731px;height:1px;background:#f0f0f0"></div>
<div style="position:absolute;left:269px;top:189px;width:731px;height:1px;background:#f0f0f0"></div>
<div style="position:absolute;left:269px;top:203px;width:731px;height:1px;background:#f0f0f0"></div>
<div style="position:absolute;left:269px;top:217px;width:731px;height:1px;background:#f0f0f0"></div>
<div style="position:absolute;left:269px;top:231px;width:731px;height:1px;background:#f0f0f0"></div>
<div style="position:absolute;left:269px;top:245px;width:731px;height:1px;background:#f0f0f0"></div>
<div style="position:absolute;left:269px;top:259px;width:731px;height:1px;background:#f0f0f0"></div>
<div style="position:absolute;left:269px;top:273px;width:731px;height:1px;background:#f0f0f0"></div>
<div style="position:absolute;left:269px;top:287px;width:731px;height:1px;background:#f0f0f0"></div>
<div style="position:absolute;left:269px;top:301px;width:731px;height:1px;background:#f0f0f0"></div>
<div style="position:absolute;left:269px;top:315px;width:731px;height:1px;background:#f0f0f0"></div>
<div style="position:absolute;left:269px;top:329px;width:731px;height:1px;background:#f0f0f0"></div>
<div style="position:absolute;left:269px;top:343px;width:731px;height:1px;background:#f0f0f0"></div>
<div style="position:absolute;left:269px;top:357px;width:731px;height:1px;background:#f0f0f0"></div>
<div style="position:absolute;left:269px;top:371px;width:731px;height:1px;background:#f0f0f0"></div>
<div style="position:absolute;left:269px;top:385px;width:731px;height:1px;background:#f0f0f0"></div>
<div style="position:absolute;left:269px;top:399px;width:731px;height:1px;background:#f0f0f0"></div>
<div style="position:absolute;left:269px;top:413px;width:731px;height:1px;background:#f0f0f0"></div>
<div style="position:absolute;left:269px;top:427px;width:731px;height:1px;background:#f0f0f0"></div>
<div style="position:absolute;left:269px;top:441px;width:731px;height:1px;background:#f0f0f0"></div>
<div style="position:absolute;left:269px;top:455px;width:731px;height:1px;background:#f0f0f0"></div>
<div style="position:absolute;left:269px;top:469px;width:731px;height:1px;background:#f0f0f0"></div>
<div style="position:absolute;left:269px;top:483px;width:731px;height:1px;background:#f0f0f0"></div>
<div style="position:absolute;left:269px;top:497px;width:731px;height:1px;background:#f0f0f0"></div>
<div style="position:absolute;left:269px;top:511px;width:731px;height:1px;background:#f0f0f0"></div>
<div style="position:absolute;left:269px;top:525px;width:731px;height:1px;background:#f0f0f0"></div>
<div style="position:absolute;left:269px;top:539px;width:731px;height:1px;background:#f0f0f0"></div>
<div style="position:absolute;left:269px;top:553px;width:731px;height:1px;background:#f0f0f0"></div>
<div style="position:absolute;left:269px;top:567px;width:731px;height:1px;background:#f0f0f0"></div>
<div style="position:absolute;left:319px;top:117px;width:1px;height:463px;background:#f0f0f0"></div>
<div style="position:absolute;left:499px;top:117px;width:1px;height:463px;background:#f0f0f0"></div>
<div style="position:absolute;left:549px;top:117px;width:1px;height:463px;background:#f0f0f0"></div>
<div style="position:absolute;left:649px;top:117px;width:1px;height:463px;background:#f0f0f0"></div>
<div style="position:absolute;left:729px;top:117px;width:1px;height:463px;background:#f0f0f0"></div>
<div style="position:absolute;left:929px;top:117px;width:1px;height:463px;background:#f0f0f0"></div>
<div class="m" style="left:273px;top:120px;line-height:14px;color:#000;white-space:nowrap">(0604)</div>
<div class="m" style="left:325px;top:120px;line-height:14px;color:#000;white-space:nowrap">Custom Profile Control</div>
<div class="m" style="left:273px;top:134px;line-height:14px;color:#000;white-space:nowrap">(0606)</div>
<div class="m" style="left:325px;top:134px;line-height:14px;color:#000;white-space:nowrap">Memory Timing Information</div>
<div class="m" style="left:505px;top:134px;line-height:14px;color:#000;white-space:nowrap">Yes</div>
<div class="m" style="left:555px;top:134px;line-height:14px;color:#000;white-space:nowrap">Default</div>
<div class="m" style="left:273px;top:148px;line-height:14px;color:#000;white-space:nowrap">(05DA)</div>
<div class="m" style="left:325px;top:148px;line-height:14px;color:#000;white-space:nowrap">Memory Frequency</div>
<div class="m" style="left:505px;top:148px;line-height:14px;color:#000;white-space:nowrap">Yes</div>
<div class="m" style="left:555px;top:148px;line-height:14px;color:#000;white-space:nowrap">Default</div>
<div class="m" style="left:273px;top:162px;line-height:14px;color:#000;white-space:nowrap">(05EA)</div>
<div class="m" style="left:325px;top:162px;line-height:14px;color:#000;white-space:nowrap">CAS Latency (tCL)</div>
<div class="m" style="left:505px;top:162px;line-height:14px;color:#000;white-space:nowrap">Yes</div>
<div class="m" style="left:555px;top:162px;line-height:14px;color:#000;white-space:nowrap">Default</div>
<div class="m" style="left:273px;top:176px;line-height:14px;color:#000;white-space:nowrap">(05EF)</div>
<div class="m" style="left:325px;top:176px;line-height:14px;color:#000;white-space:nowrap">CAS to RAS (tRCDmin)</div>
<div class="m" style="left:505px;top:176px;line-height:14px;color:#000;white-space:nowrap">Yes</div>
<div class="m" style="left:555px;top:176px;line-height:14px;color:#000;white-space:nowrap">Default</div>
<div class="m" style="left:273px;top:190px;line-height:14px;color:#000;white-space:nowrap">(05F3)</div>
<div class="m" style="left:325px;top:190px;line-height:14px;color:#000;white-space:nowrap">Row Precharge (tRPmin)</div>
<div class="m" style="left:505px;top:190px;line-height:14px;color:#000;white-space:nowrap">Yes</div>
<div class="m" style="left:555px;top:190px;line-height:14px;color:#000;white-space:nowrap">Default</div>
<div class="m" style="left:273px;top:204px;line-height:14px;color:#000;white-space:nowrap">(05F7)</div>
<div class="m" style="left:325px;top:204px;line-height:14px;color:#000;white-space:nowrap">Active to Precharge (tRASmin)</div>
<div class="m" style="left:505px;top:204px;line-height:14px;color:#000;white-space:nowrap">Yes</div>
<div class="m" style="left:555px;top:204px;line-height:14px;color:#000;white-space:nowrap">Default</div>
<div class="m" style="left:273px;top:218px;line-height:14px;color:#000;white-space:nowrap">(04F2)</div>
<div class="m" style="left:325px;top:218px;line-height:14px;color:#000;white-space:nowrap">Write Recovery (tWRmin)</div>
<div class="m" style="left:505px;top:218px;line-height:14px;color:#000;white-space:nowrap">Yes</div>
<div class="m" style="left:555px;top:218px;line-height:14px;color:#000;white-space:nowrap">Default</div>
<div class="m" style="left:273px;top:232px;line-height:14px;color:#000;white-space:nowrap">(04F5)</div>
<div class="m" style="left:325px;top:232px;line-height:14px;color:#000;white-space:nowrap">Refresh Recovery (tRFCmin)</div>
<div class="m" style="left:505px;top:232px;line-height:14px;color:#000;white-space:nowrap">Yes</div>
<div class="m" style="left:555px;top:232px;line-height:14px;color:#000;white-space:nowrap">Default</div>
<div class="m" style="left:273px;top:246px;line-height:14px;color:#000;white-space:nowrap">(04FB)</div>
<div class="m" style="left:325px;top:246px;line-height:14px;color:#000;white-space:nowrap">Row Active to Row Active (tRRD...</div>
<div class="m" style="left:505px;top:246px;line-height:14px;color:#000;white-space:nowrap">Yes</div>
<div class="m" style="left:555px;top:246px;line-height:14px;color:#000;white-space:nowrap">Default</div>
<div class="m" style="left:273px;top:260px;line-height:14px;color:#000;white-space:nowrap">(04F8)</div>
<div class="m" style="left:325px;top:260px;line-height:14px;color:#000;white-space:nowrap">Internal Write to Read Command ...</div>
<div class="m" style="left:505px;top:260px;line-height:14px;color:#000;white-space:nowrap">Yes</div>
<div class="m" style="left:555px;top:260px;line-height:14px;color:#000;white-space:nowrap">Default</div>
<div class="m" style="left:273px;top:274px;line-height:14px;color:#000;white-space:nowrap">(04FE)</div>
<div class="m" style="left:325px;top:274px;line-height:14px;color:#000;white-space:nowrap">Internal Read to Precharge Com...</div>
<div class="m" style="left:505px;top:274px;line-height:14px;color:#000;white-space:nowrap">Yes</div>
<div class="m" style="left:555px;top:274px;line-height:14px;color:#000;white-space:nowrap">Default</div>
<div class="m" style="left:273px;top:288px;line-height:14px;color:#000;white-space:nowrap">(05FA)</div>
<div class="m" style="left:325px;top:288px;line-height:14px;color:#000;white-space:nowrap">Four Activate Window (tFAWmin)</div>
<div class="m" style="left:505px;top:288px;line-height:14px;color:#000;white-space:nowrap">Yes</div>
<div class="m" style="left:555px;top:288px;line-height:14px;color:#000;white-space:nowrap">Default</div>
<div class="m" style="left:273px;top:302px;line-height:14px;color:#000;white-space:nowrap">(01EF)</div>
<div class="m" style="left:505px;top:302px;line-height:14px;color:#000;white-space:nowrap">Yes</div>
<div class="m" style="left:555px;top:302px;line-height:14px;color:#000;white-space:nowrap">Default</div>
<div class="m" style="left:273px;top:316px;line-height:14px;color:#000;white-space:nowrap">(0607)</div>
<div class="m" style="left:325px;top:316px;line-height:14px;color:#000;white-space:nowrap">Memory Timing Configuration</div>
<div class="m" style="left:505px;top:316px;line-height:14px;color:#000;white-space:nowrap">Yes</div>
<div class="m" style="left:555px;top:316px;line-height:14px;color:#000;white-space:nowrap">Default</div>
<div class="m" style="left:273px;top:330px;line-height:14px;color:#000;white-space:nowrap">(060E)</div>
<div class="m" style="left:325px;top:330px;line-height:14px;color:#000;white-space:nowrap">Memory Frequency Limiter</div>
<div class="m" style="left:505px;top:330px;line-height:14px;color:#000;white-space:nowrap">Yes</div>
<div class="m" style="left:555px;top:330px;line-height:14px;color:#000;white-space:nowrap">Default</div>
<div class="m" style="left:655px;top:330px;line-height:14px;color:#000;white-space:nowrap">1333</div>
<div class="m" style="left:273px;top:344px;line-height:14px;color:#000;white-space:nowrap">(04DC)</div>
<div class="m" style="left:325px;top:344px;line-height:14px;color:#000;white-space:nowrap">tCL</div>
<div class="m" style="left:505px;top:344px;line-height:14px;color:#000;white-space:nowrap">Yes</div>
<div class="m" style="left:555px;top:344px;line-height:14px;color:#000;white-space:nowrap">Default</div>
<div class="m" style="left:655px;top:344px;line-height:14px;color:#000;white-space:nowrap">0</div>
<div class="m" style="left:273px;top:358px;line-height:14px;color:#000;white-space:nowrap">(04DE)</div>
<div class="m" style="left:325px;top:358px;line-height:14px;color:#000;white-space:nowrap">tRCD</div>
<div class="m" style="left:505px;top:358px;line-height:14px;color:#000;white-space:nowrap">Yes</div>
<div class="m" style="left:555px;top:358px;line-height:14px;color:#000;white-space:nowrap">Default</div>
<div class="m" style="left:655px;top:358px;line-height:14px;color:#000;white-space:nowrap">0</div>
<div class="m" style="left:273px;top:372px;line-height:14px;color:#000;white-space:nowrap">(04E0)</div>
<div class="m" style="left:325px;top:372px;line-height:14px;color:#000;white-space:nowrap">tRP</div>
<div class="m" style="left:505px;top:372px;line-height:14px;color:#000;white-space:nowrap">Yes</div>
<div class="m" style="left:555px;top:372px;line-height:14px;color:#000;white-space:nowrap">Default</div>
<div class="m" style="left:655px;top:372px;line-height:14px;color:#000;white-space:nowrap">0</div>
<div class="m" style="left:273px;top:386px;line-height:14px;color:#000;white-space:nowrap">(04E2)</div>
<div class="m" style="left:325px;top:386px;line-height:14px;color:#000;white-space:nowrap">tRAS</div>
<div class="m" style="left:505px;top:386px;line-height:14px;color:#000;white-space:nowrap">Yes</div>
<div class="m" style="left:555px;top:386px;line-height:14px;color:#000;white-space:nowrap">Default</div>
<div class="m" style="left:655px;top:386px;line-height:14px;color:#000;white-space:nowrap">0</div>
<div class="m" style="left:273px;top:400px;line-height:14px;color:#000;white-space:nowrap">(04E4)</div>
<div class="m" style="left:325px;top:400px;line-height:14px;color:#000;white-space:nowrap">tWR</div>
<div class="m" style="left:505px;top:400px;line-height:14px;color:#000;white-space:nowrap">Yes</div>
<div class="m" style="left:555px;top:400px;line-height:14px;color:#000;white-space:nowrap">Default</div>
<div class="m" style="left:655px;top:400px;line-height:14px;color:#000;white-space:nowrap">0</div>
<div class="m" style="left:273px;top:414px;line-height:14px;color:#000;white-space:nowrap">(04E6)</div>
<div class="m" style="left:325px;top:414px;line-height:14px;color:#000;white-space:nowrap">tRFC</div>
<div class="m" style="left:505px;top:414px;line-height:14px;color:#000;white-space:nowrap">Yes</div>
<div class="m" style="left:555px;top:414px;line-height:14px;color:#000;white-space:nowrap">Default</div>
<div class="m" style="left:655px;top:414px;line-height:14px;color:#000;white-space:nowrap">0</div>
<div class="m" style="left:273px;top:428px;line-height:14px;color:#000;white-space:nowrap">(04E8)</div>
<div class="m" style="left:325px;top:428px;line-height:14px;color:#000;white-space:nowrap">tRRD</div>
<div class="m" style="left:505px;top:428px;line-height:14px;color:#000;white-space:nowrap">Yes</div>
<div class="m" style="left:555px;top:428px;line-height:14px;color:#000;white-space:nowrap">Default</div>
<div class="m" style="left:655px;top:428px;line-height:14px;color:#000;white-space:nowrap">0</div>
<div class="m" style="left:273px;top:442px;line-height:14px;color:#000;white-space:nowrap">(04EA)</div>
<div class="m" style="left:325px;top:442px;line-height:14px;color:#000;white-space:nowrap">tWTR</div>
<div class="m" style="left:505px;top:442px;line-height:14px;color:#000;white-space:nowrap">Yes</div>
<div class="m" style="left:555px;top:442px;line-height:14px;color:#000;white-space:nowrap">Default</div>
<div class="m" style="left:655px;top:442px;line-height:14px;color:#000;white-space:nowrap">0</div>
<div class="m" style="left:735px;top:442px;line-height:14px;color:#000;white-space:nowrap">3</div>
<div class="m" style="left:273px;top:456px;line-height:14px;color:#000;white-space:nowrap">(04EC)</div>
<div class="m" style="left:325px;top:456px;line-height:14px;color:#000;white-space:nowrap">tRTP</div>
<div class="m" style="left:505px;top:456px;line-height:14px;color:#000;white-space:nowrap">Yes</div>
<div class="m" style="left:555px;top:456px;line-height:14px;color:#000;white-space:nowrap">Default</div>
<div class="m" style="left:655px;top:456px;line-height:14px;color:#000;white-space:nowrap">0</div>
<div class="m" style="left:735px;top:456px;line-height:14px;color:#000;white-space:nowrap">4</div>
<div class="m" style="left:273px;top:470px;line-height:14px;color:#000;white-space:nowrap">(04F0)</div>
<div class="m" style="left:325px;top:470px;line-height:14px;color:#000;white-space:nowrap">tFAW</div>
<div class="m" style="left:505px;top:470px;line-height:14px;color:#000;white-space:nowrap">Yes</div>
<div class="m" style="left:555px;top:470px;line-height:14px;color:#000;white-space:nowrap">Default</div>
<div class="m" style="left:655px;top:470px;line-height:14px;color:#000;white-space:nowrap">0</div>
<div class="m" style="left:735px;top:470px;line-height:14px;color:#000;white-space:nowrap">10</div>
<div style="position:absolute;left:318px;top:328px;width:613px;height:157px;border:3px solid #d6202a;box-sizing:border-box"></div>
<div style="position:absolute;left:730px;top:331px;width:197px;height:18px;background:#fff;border:1px solid #7a7a7a;border-right-color:#e3e3e3;border-bottom-color:#e3e3e3;box-sizing:border-box"></div>
<div class="m" style="left:734px;top:334px;line-height:14px;color:#000;">1333</div>
<div style="position:absolute;left:910px;top:332px;width:17px;height:17px;background:#f0f0f0;border-right:1px solid #696969;border-bottom:1px solid #696969;box-sizing:border-box"></div>
<div style="position:absolute;left:910px;top:332px;width:16px;height:1px;background:#fff"></div>
<div style="position:absolute;left:910px;top:332px;width:1px;height:16px;background:#fff"></div>
<div style="position:absolute;left:925px;top:333px;width:1px;height:15px;background:#a0a0a0"></div>
<div style="position:absolute;left:911px;top:347px;width:15px;height:1px;background:#a0a0a0"></div>
<svg style="position:absolute;left:915px;top:338px" width="7" height="4"><path d="M0 0 H7 L3.5 4 Z" fill="#000"/></svg>
<div style="position:absolute;left:729px;top:351px;width:199px;height:92px;background:#fff;border:1px solid #646464;border-right-color:#eaeaea;box-sizing:border-box"></div>
<div style="position:absolute;left:912px;top:352px;width:16px;height:90px;background:#eaeaea"></div>
<svg style="position:absolute;left:917px;top:359px" width="7" height="4"><path d="M0 4 L3.5 0 L7 4 Z" fill="#9a9a9a"/></svg>
<svg style="position:absolute;left:917px;top:434px" width="7" height="4"><path d="M0 0 L3.5 4 L7 0 Z" fill="#9a9a9a"/></svg>
<div style="position:absolute;left:730px;top:365px;width:181px;height:13px;background:#3399ff"></div>
<div class="m" style="left:732px;top:353px;line-height:13px;color:#000;">1067</div>
<div class="m" style="left:732px;top:366px;line-height:13px;color:#fff;">1333</div>
<div class="m" style="left:732px;top:379px;line-height:13px;color:#000;">1600</div>
<div class="m" style="left:732px;top:392px;line-height:13px;color:#000;">1867</div>
<div class="m" style="left:732px;top:405px;line-height:13px;color:#000;">2133</div>
<div class="m" style="left:732px;top:418px;line-height:13px;color:#000;">2400</div>
<div class="m" style="left:732px;top:431px;line-height:13px;color:#000;">2667</div>
<div style="position:absolute;left:17px;top:592px;width:902px;height:34px;border:1px solid #a0a0a0;border-right-color:#a0a0a0;box-sizing:border-box"></div>
<div style="position:absolute;left:18px;top:593px;width:900px;height:32px;border-top:1px solid #fff;border-left:1px solid #fff;box-sizing:border-box"></div>
<div style="position:absolute;left:23px;top:588px;width:88px;height:10px;background:#f0f0f0"></div>
<div class="m" style="left:26px;top:586px;line-height:14px;color:#000;">Menu Help String</div>
<div style="position:absolute;left:17px;top:638px;width:902px;height:42px;border:1px solid #a0a0a0;border-right-color:#a0a0a0;box-sizing:border-box"></div>
<div style="position:absolute;left:18px;top:639px;width:900px;height:40px;border-top:1px solid #fff;border-left:1px solid #fff;box-sizing:border-box"></div>
<div style="position:absolute;left:23px;top:634px;width:93px;height:10px;background:#f0f0f0"></div>
<div class="m" style="left:26px;top:632px;line-height:14px;color:#000;">Control Help String</div>
<div style="position:absolute;left:927px;top:658px;width:75px;height:23px;background:#f0f0f0;border-right:1px solid #696969;border-bottom:1px solid #696969;box-sizing:border-box"></div>
<div style="position:absolute;left:927px;top:658px;width:74px;height:1px;background:#fff"></div>
<div style="position:absolute;left:927px;top:658px;width:1px;height:22px;background:#fff"></div>
<div style="position:absolute;left:928px;top:679px;width:73px;height:1px;background:#a0a0a0"></div>
<div style="position:absolute;left:1000px;top:659px;width:1px;height:21px;background:#a0a0a0"></div>
<div class="m" style="left:952px;top:662px;line-height:14px;color:#000;"><u>U</u>ndo</div>
</body></html>
